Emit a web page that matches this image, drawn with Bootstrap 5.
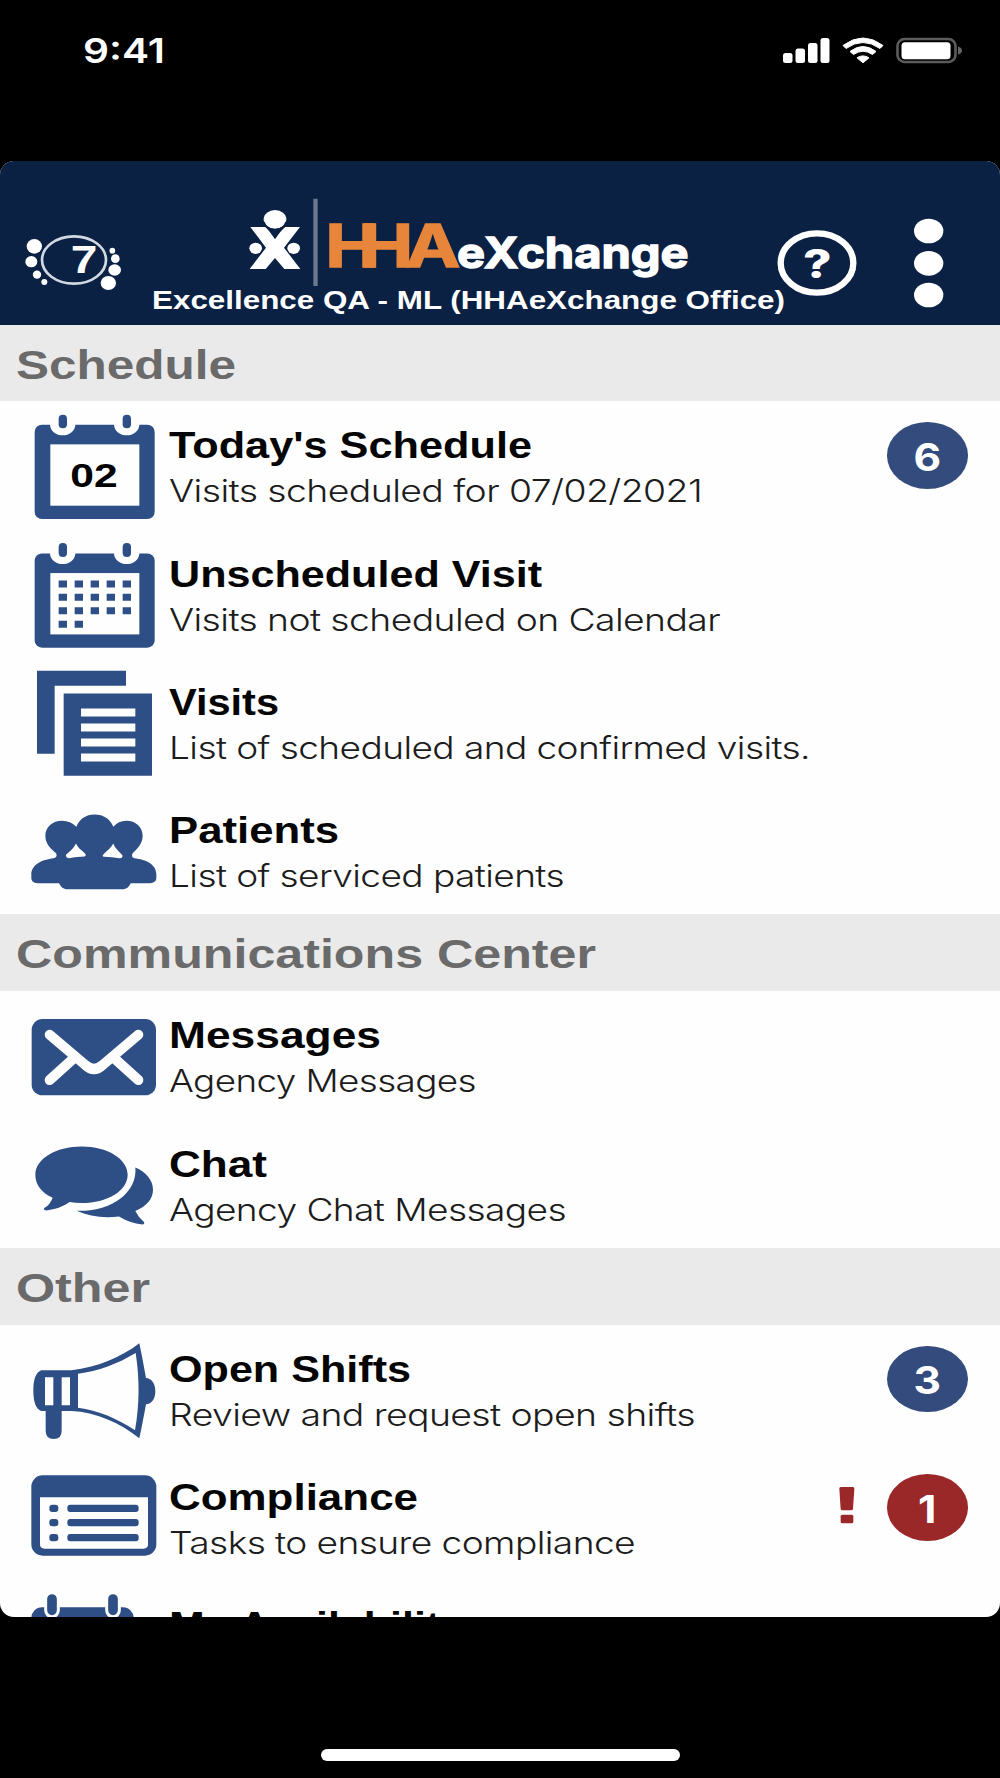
<!DOCTYPE html>
<html lang="en">
<head>
<meta charset="utf-8">
<meta name="viewport" content="width=device-width, initial-scale=1">
<title>HHAeXchange</title>
<link href="https://cdn.jsdelivr.net/npm/bootstrap@5.3.0/dist/css/bootstrap.min.css" rel="stylesheet">
<style>
  :root { --navy:#0a2144; --ink-blue:#2d4f86; }
  body { background:#000; font-family:"Liberation Sans",Arial,sans-serif; width:1000px; height:1778px; overflow:hidden; }
  svg { display:block; flex:none; }
  .status-bar { height:161px; }
  .clock { font:600 34px/40px Inter,sans-serif; color:#fff; margin:31px 0 0 83px; }
  .app-panel { height:1456px; border-radius:14px; overflow:hidden; background:#fefefe; }
  .app-header { height:163.5px; background:var(--navy); }
  .office { font-size:25.5px; line-height:30px; font-weight:700; color:#fff; margin:-1px 0 0 2px; }
  .brand-col { width:626px; }
  .section-head { height:76.8px; padding:2px 0 0 16px; background:#eaeaea; color:#6a6a6a; font-size:41px; line-height:76px; font-weight:700; }
  .menu-row { height:128.3px; }
  .menu-text { padding-top:24px; color:#050505; }
  .menu-title { font-size:37.3px; line-height:40px; font-weight:700; }
  .menu-sub { font:300 31px/40px Inter,sans-serif; letter-spacing:-.5px; margin-top:6px; color:#1c1c1c; }
  .fit { display:inline-block; white-space:nowrap; transform-origin:0 50%; }
  .count { width:81px; height:66.6px; border-radius:50%; margin:21px 32px 0 0; background:#344b7d; color:#fff; font:700 38px/1 Inter,sans-serif; padding:3px 0 0; }
  .count.alert-count { background:#9b2828; }
  .count span { transform:scaleX(1.12); }
  .bang { margin-right:32px; }
  .icon { fill:var(--ink-blue); }
  .home-bar { width:359px; height:12px; border-radius:6px; margin:132px auto 0; background:#fff; }
</style>
<script src="https://cdn.jsdelivr.net/npm/bootstrap@5.3.0/dist/js/bootstrap.bundle.min.js"></script>
</head>
<body>
<div class="status-bar d-flex justify-content-between">
  <div class="clock"><span class="fit" data-w="82">9:41</span></div>
  <svg width="220" height="161" viewBox="780 0 220 161" fill="#fff">
    <rect x="783" y="53" width="9.500" height="10" rx="2.5"/><rect x="795.500" y="48.5" width="9.500" height="14.5" rx="2.5"/><rect x="808" y="43" width="9.500" height="20" rx="2.5"/><rect x="820.500" y="38" width="9" height="25" rx="2.5"/>
    <path d="M843 45.500Q863 30.500 883 45.500L880 48.500Q863 36.500 846 48.500Z" stroke="#fff" stroke-linejoin="round"/>
    <path d="M850 51.500Q863 41.500 876 51.500L872.500 54.500Q863 48 853.500 54.500Z" stroke="#fff" stroke-linejoin="round"/>
    <path d="M857 57.8Q863 54 869 57.8L863 62.800Z" stroke="#fff" stroke-linejoin="round"/>
    <rect x="897.500" y="39" width="58" height="23" rx="7" fill="none" stroke="#5c5c5c" stroke-width="2.6"/>
    <rect x="901.500" y="42.3" width="49" height="17" rx="3.500"/>
    <path d="M958 46.500Q962 47.500 962 50.500T958 54.500Z" fill="#646464"/>
  </svg>
</div>

<main class="app-panel">
  <header class="app-header d-flex">
    <svg width="150" height="163.5" viewBox="0 33 450 490.5" fill="#fff">
      <ellipse cx="222" cy="330" rx="96" ry="71" fill="none" stroke="#d3d9e2" stroke-width="8"/>
      <ellipse cx="103" cy="289" rx="23" ry="22"/><ellipse cx="94" cy="335" rx="18" ry="17"/><circle cx="111" cy="374" r="12.500"/><circle cx="133" cy="396" r="9"/>
      <circle cx="337" cy="302" r="8.500"/><circle cx="346" cy="326" r="13"/><ellipse cx="344" cy="360" rx="19" ry="17"/><ellipse cx="325" cy="399" rx="23" ry="21"/>
      <text x="212" y="368" font-size="116" font-weight="700" textLength="80" lengthAdjust="spacingAndGlyphs">7</text>
    </svg>
    <div class="brand-col">
      <svg width="626" height="125" viewBox="-210 -57 1878 375">
        <g fill="#fff">
          <ellipse cx="165" cy="118" rx="34" ry="28"/>
          <path d="M91 141H136Q147 151 165 178Q183 151 196 141H240L192 203L241 267H193L165 234L137 267H89L138 203Z"/>
          <ellipse cx="107" cy="205" rx="19" ry="17"/><ellipse cx="221" cy="205" rx="19" ry="17"/>
        </g>
        <path d="M132 126Q140 149 165 149T198 126" fill="none" stroke="#0a2144" stroke-width="4"/>
        <path d="M280 56h13v269h-13z" fill="#6a7890"/>
        <g fill="#e7853b" stroke="#e7853b" stroke-width="4" font-family="Inter" font-weight="700" font-size="179">
          <text x="316" y="261" textLength="165" lengthAdjust="spacingAndGlyphs">H</text>
          <text x="415" y="261" textLength="165" lengthAdjust="spacingAndGlyphs">H</text>
          <text x="557" y="261" textLength="164" lengthAdjust="spacingAndGlyphs">A</text>
        </g>
        <text x="711" y="263" fill="#fff" stroke="#fff" stroke-width="4" font-family="Inter" font-weight="700" font-size="128" textLength="695" lengthAdjust="spacingAndGlyphs">eXchange</text>
      </svg>
      <div class="office"><span class="fit" data-w="633">Excellence QA - ML (HHAeXchange Office)</span></div>
    </div>
    <svg width="224" height="163.500" viewBox="108 -57 672 490.5" fill="#fff">
      <ellipse cx="231" cy="249" rx="109" ry="89" fill="none" stroke="#fff" stroke-width="19"/>
      <text x="189" y="294" font-family="Inter" font-weight="800" font-size="119" textLength="86" lengthAdjust="spacingAndGlyphs">?</text>
      <ellipse cx="566" cy="153" rx="44" ry="37"/><ellipse cx="566" cy="250" rx="44" ry="37"/><ellipse cx="566" cy="345" rx="44" ry="37"/>
    </svg>
  </header>

  <section>
    <h2 class="section-head m-0"><span class="fit" data-w="220">Schedule</span></h2>
    <div class="menu-row d-flex">
      <svg class="icon" width="169" height="128.300" viewBox="0 213.9 507 384.9">
        <rect x="104" y="285" width="360" height="283" rx="22"/>
        <g fill="#fefefe"><path d="M150 270H226V285C226 304 206 317 188 317S150 304 150 285Z"/><path d="M342 270H418V285C418 304 398 317 380 317S342 304 342 285Z"/><rect x="151" y="344" width="267" height="184"/></g>
        <rect x="176" y="255" width="25" height="41" rx="12"/><rect x="368" y="255" width="25" height="41" rx="12"/>
        <text x="211" y="471" fill="#000" font-size="101" font-weight="700" textLength="142" lengthAdjust="spacingAndGlyphs">02</text>
      </svg>
      <div class="menu-text"><div class="menu-title"><span class="fit" data-w="363">Today's Schedule</span></div><div class="menu-sub"><span class="fit" data-w="533">Visits scheduled for 07/02/2021</span></div></div>
      <span class="count badge ms-auto d-flex align-items-center justify-content-center"><span>6</span></span>
    </div>
    <div class="menu-row d-flex">
      <svg class="icon" width="169" height="128.300" viewBox="0 598.8 507 384.9">
        <g transform="translate(0 384)">
        <rect x="104" y="285" width="360" height="283" rx="22"/>
        <g fill="#fefefe"><path d="M150 270H226V285C226 304 206 317 188 317S150 304 150 285Z"/><path d="M342 270H418V285C418 304 398 317 380 317S342 304 342 285Z"/><rect x="151" y="344" width="267" height="184"/></g>
        <rect x="176" y="254" width="25" height="42" rx="12"/><rect x="368" y="254" width="25" height="42" rx="12"/>
        </g>
        <path d="M176 760.500H393M176 800.500H393M176 841H393M176 881.500H249" fill="none" stroke="#2d4f86" stroke-width="21" stroke-dasharray="25 23"/>
      </svg>
      <div class="menu-text"><div class="menu-title"><span class="fit" data-w="373">Unscheduled Visit</span></div><div class="menu-sub"><span class="fit" data-w="551">Visits not scheduled on Calendar</span></div></div>
    </div>
    <div class="menu-row d-flex">
      <svg class="icon" width="169" height="128.300" viewBox="0 23.7 507 384.9">
        <path d="M111 62H378V107H164V311H111Z"/>
        <path fill-rule="evenodd" d="M191 130H456V377H191ZM243 175V199H406V175ZM243 220V244H406V220ZM243 265V289H406V265ZM243 310V334H406V310Z"/>
      </svg>
      <div class="menu-text"><div class="menu-title"><span class="fit" data-w="110">Visits</span></div><div class="menu-sub"><span class="fit" data-w="641">List of scheduled and confirmed visits.</span></div></div>
    </div>
    <div class="menu-row d-flex">
      <svg class="icon" width="169" height="128.300" viewBox="0 408.6 507 384.9">
        <path fill-rule="evenodd" d="M229 531C238 508 257 494 284 494S331 508 340 531C350 519 363 513 379 513C407 513 428 532 428 558C428 583 411 597 398 610C394 617 396 623 403 625C438 629 469 643 469 674V684C469 695 461 700 450 700H392C387 711 380 718 367 718H203C189 718 183 711 177 700H113C101 700 94 694 94 684V674C94 644 126 629 161 625C169 623 172 617 168 610C153 597 136 583 136 558C136 532 158 513 186 513C203 513 218 519 229 531ZM228 581C222 595 209 605 198 615C197 621 200 625 207 625C223 622 240 621 254 620C259 617 258 614 253 609C243 600 232 592 228 581ZM340 581C334 593 322 602 312 612C306 617 307 620 312 621C328 622 343 623 359 625C365 625 369 621 367 616C358 605 345 596 340 581Z"/>
      </svg>
      <div class="menu-text"><div class="menu-title"><span class="fit" data-w="170">Patients</span></div><div class="menu-sub"><span class="fit" data-w="395">List of serviced patients</span></div></div>
    </div>
  </section>

  <section>
    <h2 class="section-head m-0"><span class="fit" data-w="580">Communications Center</span></h2>
    <div class="menu-row d-flex">
      <svg class="icon" width="169" height="128.300" viewBox="0 33.9 507 384.9">
        <rect x="95" y="118" width="373" height="229" rx="32"/>
        <path d="M149 165L256 256Q282 280 308 256L415 165M223 234L149 301M341 234L415 301" fill="none" stroke="#fefefe" stroke-width="30" stroke-linecap="round" stroke-linejoin="round"/>
      </svg>
      <div class="menu-text"><div class="menu-title"><span class="fit" data-w="212">Messages</span></div><div class="menu-sub"><span class="fit" data-w="307">Agency Messages</span></div></div>
    </div>
    <div class="menu-row d-flex">
      <svg class="icon" width="169" height="128.300" viewBox="0 418.800 507 384.9">
        <path d="M245 498C322 498 383 535 383 583S322 668 245 668Q226 668 209 665Q180 686 139 690Q128 689 133 683Q149 675 158 652C124 637 106 612 106 583C106 535 168 498 245 498Z"/>
        <path d="M406 561C438 574 459 599 459 628C459 655 440 677 406 692Q415 711 432 725Q435 732 427 732Q390 728 357 708C311 714 267 708 230 691C334 695 413 636 406 561Z"/>
      </svg>
      <div class="menu-text"><div class="menu-title"><span class="fit" data-w="98">Chat</span></div><div class="menu-sub"><span class="fit" data-w="397">Agency Chat Messages</span></div></div>
    </div>
  </section>

  <section>
    <h2 class="section-head m-0"><span class="fit" data-w="134">Other</span></h2>
    <div class="menu-row d-flex">
      <svg class="icon" width="169" height="128.300" viewBox="0 14.1 507 384.9">
        <path fill-rule="evenodd" d="M124 150H215C290 141 362 112 418 69C425 103 432 138 438 173C455 174 466 190 466 213S455 251 438 252C432 286 425 321 418 354C360 307 286 275 215 272H185V331Q185 356 161 356T137 331V272H124C108 266 100 245 100 211S108 155 124 150ZM135 171V255H160V171ZM185 171V255H210V171ZM234 160V262C294 270 352 294 405 330C419 253 419 175 407 98C354 130 294 153 234 160Z"/>
      </svg>
      <div class="menu-text"><div class="menu-title"><span class="fit" data-w="242">Open Shifts</span></div><div class="menu-sub"><span class="fit" data-w="526">Review and request open shifts</span></div></div>
      <span class="count badge ms-auto d-flex align-items-center justify-content-center"><span>3</span></span>
    </div>
    <div class="menu-row d-flex">
      <svg class="icon" width="169" height="128.300" viewBox="0 399 507 384.9">
        <rect x="94" y="466" width="375" height="241" rx="34"/><path d="M120 532H444V673Q444 686 430 686H134Q120 686 120 673Z" fill="#fefefe"/>
        <rect x="148" y="554" width="27" height="22" rx="9"/><rect x="148" y="597" width="27" height="22" rx="9"/><rect x="148" y="642" width="27" height="22" rx="9"/>
        <rect x="202" y="554" width="214" height="22" rx="9"/><rect x="202" y="597" width="214" height="22" rx="9"/><rect x="202" y="642" width="214" height="22" rx="9"/>
      </svg>
      <div class="menu-text"><div class="menu-title"><span class="fit" data-w="249">Compliance</span></div><div class="menu-sub"><span class="fit" data-w="466">Tasks to ensure compliance</span></div></div>
      <svg class="bang ms-auto" width="16" height="128.300" viewBox="118 399 48 384.9" fill="#9b2828"><path d="M123 501H160Q164 501 164 506L160 567Q159 571 155 571H128Q124 571 123 567L119 506Q119 501 123 501Z"/><rect x="123" y="584" width="38" height="26" rx="5"/></svg>
      <span class="count alert-count badge d-flex align-items-center justify-content-center"><span>1</span></span>
    </div>
    <div class="menu-row d-flex">
      <svg class="icon" width="169" height="128.300" viewBox="0 783.9 507 384.9">
        <rect x="94" y="863" width="307" height="270" rx="32"/>
        <g stroke="#fefefe" stroke-width="9"><rect x="137" y="819" width="38" height="72" rx="19"/><rect x="320" y="819" width="38" height="72" rx="19"/></g>
      </svg>
      <div class="menu-text"><div class="menu-title"><span class="fit" data-w="295">My Availability</span></div></div>
    </div>
  </section>
</main>
<div class="home-bar"></div>
<script>
  // Stretch each label horizontally to its wide-face width.
  document.querySelectorAll('.fit').forEach(function (el) {
    el.style.transform = 'scaleX(' + el.dataset.w / el.getBoundingClientRect().width + ')';
  });
</script>
</body>
</html>
